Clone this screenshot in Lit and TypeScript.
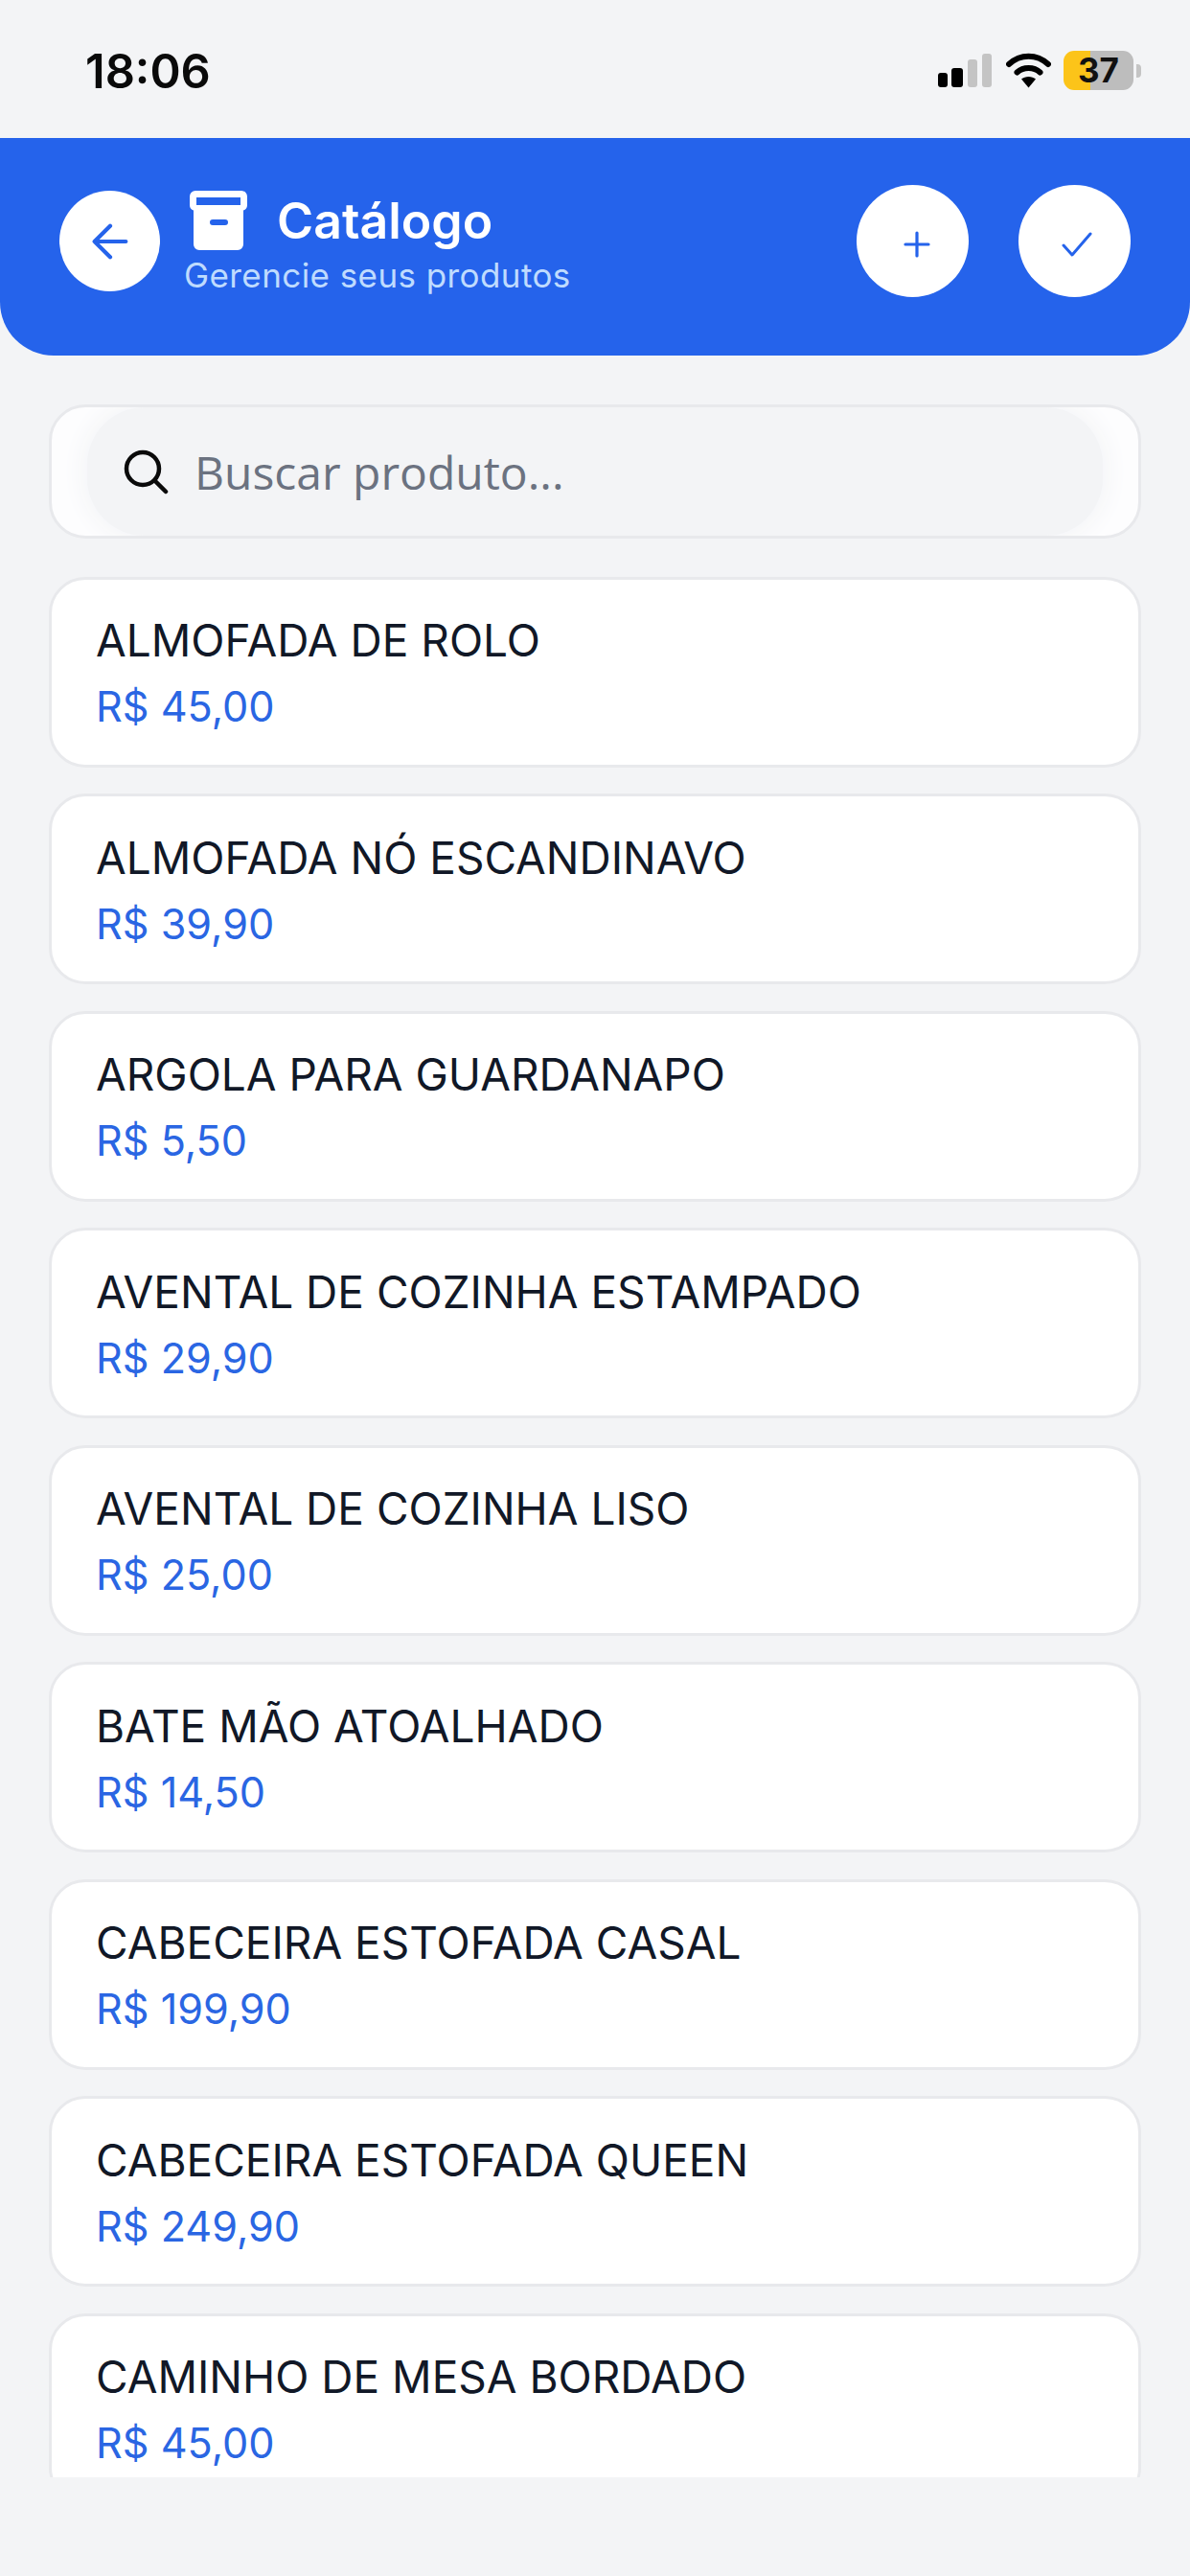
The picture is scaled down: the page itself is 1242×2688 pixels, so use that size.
import { LitElement, html, css, svg } from "lit";
import { customElement } from "lit/decorators.js";

const products: [string, string][] = [
  ["ALMOFADA DE ROLO", "R$ 45,00"],
  ["ALMOFADA NÓ ESCANDINAVO", "R$ 39,90"],
  ["ARGOLA PARA GUARDANAPO", "R$ 5,50"],
  ["AVENTAL DE COZINHA ESTAMPADO", "R$ 29,90"],
  ["AVENTAL DE COZINHA LISO", "R$ 25,00"],
  ["BATE MÃO ATOALHADO", "R$ 14,50"],
  ["CABECEIRA ESTOFADA CASAL", "R$ 199,90"],
  ["CABECEIRA ESTOFADA QUEEN", "R$ 249,90"],
  ["CAMINHO DE MESA BORDADO", "R$ 45,00"],
];

@customElement("app-root")
export class AppRoot extends LitElement {
  static styles = css`
    :host {
      display: flex;
      flex-direction: column;
      width: 1242px;
      height: 2688px;
      background: #f3f4f6;
      font-family: Inter, "Liberation Sans", sans-serif;
      overflow: hidden;
    }
    .status {
      height: 144px;
      flex: none;
      box-sizing: border-box;
      padding: 48px 51px 0 89px;
      display: flex;
      justify-content: space-between;
      align-items: flex-start;
    }
    .time {
      font-size: 48.8px;
      font-weight: 600;
      line-height: 54px;
      color: #0a0a0a;
    }
    .sys {
      display: flex;
      align-items: center;
      gap: 13px;
      margin-top: 5px;
    }
    .sys svg { display: block; }
    .signal { margin-right: 2px; }
    .battery {
      display: flex;
      align-items: center;
      gap: 3px;
    }
    .cell {
      width: 73px;
      height: 41px;
      border-radius: 11px;
      background: linear-gradient(to right, #fcc419 0 28px, #bdbdbd 28px);
      font-size: 35px;
      font-weight: 700;
      line-height: 41px;
      text-align: center;
      color: #111;
    }
    .nub {
      width: 5px;
      height: 14px;
      border-radius: 0 4px 4px 0;
      background: #c4c4c4;
    }
    header {
      flex: none;
      height: 227px;
      box-sizing: border-box;
      background: #2563eb;
      border-radius: 0 0 56px 56px;
      padding: 49px 62px 0 62px;
      display: flex;
      align-items: flex-start;
      justify-content: space-between;
    }
    .left {
      display: flex;
      align-items: flex-start;
      gap: 25px;
      padding-top: 6px;
    }
    .back {
      width: 105px;
      height: 105px;
      border-radius: 50%;
      background: #fff;
      display: flex;
      align-items: center;
      justify-content: center;
      flex: none;
    }
    .heading {
      display: flex;
      flex-direction: column;
    }
    .title {
      display: flex;
      align-items: center;
      gap: 31px;
      padding-left: 6px;
      font-size: 51.8px;
      font-weight: 600;
      line-height: 62px;
      color: #fff;
    }
    .sub {
      font-size: 35px;
      line-height: 44px;
      letter-spacing: 0.42px;
      color: #bfdbfe;
      margin-top: 4px;
    }
    .actions {
      display: flex;
      gap: 52px;
    }
    .round {
      width: 117px;
      height: 117px;
      border-radius: 50%;
      background: #fff;
      display: flex;
      align-items: center;
      justify-content: center;
      box-sizing: border-box;
      padding-top: 7px;
    }
    .round.plus { padding-left: 8px; }
    .round.check { padding-left: 4px; }
    main {
      flex: 1;
      margin-bottom: 103px;
      overflow: hidden;
      padding: 51px 51px 0;
      display: flex;
      flex-direction: column;
      gap: 39.5px;
    }
    .search {
      flex: none;
      height: 140px;
      box-sizing: border-box;
      border: 3px solid #e8e9ec;
      border-radius: 38px;
      background: #fdfdfe;
      padding: 0 37px;
      overflow: hidden;
    }
    .field {
      height: 100%;
      border-radius: 60px;
      background: #f3f4f6;
      display: flex;
      align-items: center;
      gap: 27px;
      padding-left: 38px;
      box-shadow: 0 0 26px 4px #f3f4f6;
    }
    .ph {
      font-family: "Open Sans", "Noto Sans", sans-serif;
      font-size: 48px;
      color: #6b7280;
    }
    .list {
      display: flex;
      flex-direction: column;
      gap: 27.5px;
    }
    .card {
      flex: none;
      height: 199px;
      box-sizing: border-box;
      border: 3px solid #e8e9ec;
      border-radius: 38px;
      background: #fff;
      padding: 36.5px 46px 0;
    }
    .name {
      font-size: 46px;
      line-height: 54px;
      color: #111827;
    }
    .price {
      font-size: 43.2px;
      line-height: 52px;
      margin-top: 16px;
      color: #2a66e3;
    }
  `;

  private statusIcons() {
    return html`<svg class="signal" width="56" height="35" viewBox="0 0 56 35">
      <rect x="0" y="20" width="10" height="15" rx="3" fill="#000" />
      <rect x="14" y="15" width="12" height="20" rx="3" fill="#000" />
      <rect x="31" y="6" width="10" height="29" rx="3" fill="#c4c4c4" />
      <rect x="46" y="0" width="10" height="35" rx="3" fill="#c4c4c4" />
    </svg>
    <svg width="47" height="37" viewBox="0 0 47 37" fill="none">
      ${svg`<path d="M3 12 C15 1 32 1 44 12" stroke="#000" stroke-width="6" stroke-linecap="round"/>
      <path d="M11.5 20.5 C18 14.5 29 14.5 35.5 20.5" stroke="#000" stroke-width="6" stroke-linecap="round"/>
      <path d="M16 27.5 C20 24 27 24 31 27.5 L23.500 36.500 Z" fill="#000"/>`}
    </svg>`;
  }

  render() {
    return html`
      <div class="status">
        <div class="time">18:06</div>
        <div class="sys">
          ${this.statusIcons()}
          <div class="battery">
            <div class="cell">37</div>
            <div class="nub"></div>
          </div>
        </div>
      </div>
      <header>
        <div class="left">
          <div class="back">
            <svg width="56" height="56" viewBox="0 0 24 24" fill="none" stroke="#2563eb" stroke-width="1.8" stroke-linecap="round" stroke-linejoin="round">
              <path d="M19 12H5M12 19l-7-7 7-7" />
            </svg>
          </div>
          <div class="heading">
            <div class="title">
              <svg width="60" height="62" viewBox="0 0 60 62">
                <path fill="#fff" fill-rule="evenodd" d="M6 0H54a6 6 0 0 1 6 6V15a6 6 0 0 1-4 5.600V56a6 6 0 0 1-6 6H10a6 6 0 0 1-6-6V20.600A6 6 0 0 1 0 15V6A6 6 0 0 1 6 0ZM7 7V15H53V7ZM24 30a2.500 2.500 0 0 0 0 6H37a2.500 2.500 0 0 0 0-6Z" />
              </svg>
              <span>Catálogo</span>
            </div>
            <div class="sub">Gerencie seus produtos</div>
          </div>
        </div>
        <div class="actions">
          <div class="round plus">
            <svg width="30" height="28" viewBox="0 0 30 28" fill="none" stroke="#2563eb" stroke-width="3.200" stroke-linecap="round">
              <path d="M15 2V26M3 14H27" />
            </svg>
          </div>
          <div class="round check">
            <svg width="34" height="28" viewBox="0 0 34 28" fill="none" stroke="#2563eb" stroke-width="3" stroke-linecap="round" stroke-linejoin="round">
              <path d="M3 15L12 25L31 3" />
            </svg>
          </div>
        </div>
      </header>
      <main>
        <div class="search">
          <div class="field">
            <svg width="47" height="47" viewBox="0 0 47 47" fill="none" stroke="#0a0a0a" stroke-width="4.500" stroke-linecap="round">
              <circle cx="20" cy="20" r="17" />
              <path d="M32.500 32.500L44 44" />
            </svg>
            <span class="ph">Buscar produto...</span>
          </div>
        </div>
        <div class="list">
          ${products.map(
            ([n, p]) => html`<div class="card">
              <div class="name">${n}</div>
              <div class="price">${p}</div>
            </div>`
          )}
        </div>
      </main>
    `;
  }
}
